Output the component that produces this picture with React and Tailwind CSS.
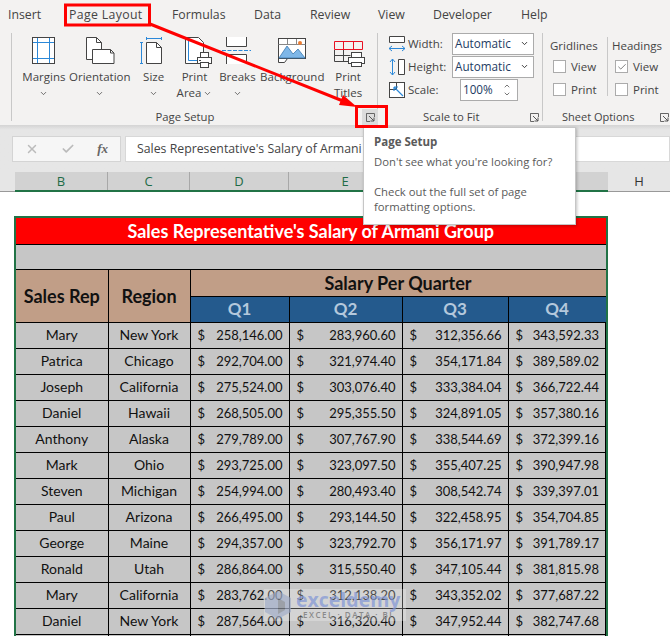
import { ChevronDown, ChevronUp, Check, X } from 'lucide-react'

const tabs = [
  ['Insert', 'w-[61px]'],
  ['Page Layout', 'w-[103px] tracking-[0.35px]'],
  ['Formulas', 'w-[82px]'],
  ['Data', 'w-[56px]'],
  ['Review', 'w-[68px]'],
  ['View', 'w-[55px]'],
  ['Developer', 'w-[88px]'],
  ['Help', 'w-[40px]'],
]

const rows = [
  ['Mary', 'New York', '258,146.00', '283,960.60', '312,356.66', '343,592.33'],
  ['Patrica', 'Chicago', '292,704.00', '321,974.40', '354,171.84', '389,589.02'],
  ['Joseph', 'California', '275,524.00', '303,076.40', '333,384.04', '366,722.44'],
  ['Daniel', 'Hawaii', '268,505.00', '295,355.50', '324,891.05', '357,380.16'],
  ['Anthony', 'Alaska', '279,789.00', '307,767.90', '338,544.69', '372,399.16'],
  ['Mark', 'Ohio', '293,725.00', '323,097.50', '355,407.25', '390,947.98'],
  ['Steven', 'Michigan', '254,994.00', '280,493.40', '308,542.74', '339,397.01'],
  ['Paul', 'Arizona', '266,495.00', '293,144.50', '322,458.95', '354,704.85'],
  ['George', 'Maine', '294,357.00', '323,792.70', '356,171.97', '391,789.17'],
  ['Ronald', 'Utah', '286,864.00', '315,550.40', '347,105.44', '381,815.98'],
  ['Mary', 'California', '283,762.00', '312,138.20', '343,352.02', '377,687.22'],
  ['Daniel', 'New York', '287,564.00', '316,320.40', '347,952.44', '382,747.68'],
  ['', '', '', '', '', ''],
]

const dark = '#444'
const blue = '#2b88d8'

function MarginsIcon() {
  return (
    <svg width="32" height="32" viewBox="0 0 32 32" fill="none">
      <rect x="4.500" y="0.500" width="22" height="26" fill="#fff" stroke={dark} />
      <path d="M9.500 1v25M21.500 1v25M5 5.500h21M5 21.500h21" stroke={blue} />
    </svg>
  )
}

function OrientationIcon() {
  return (
    <svg width="36" height="32" viewBox="0 0 36 32" fill="none">
      <path d="M4.500 0.500h10l5 5v17h-15z" fill="#fff" stroke={dark} />
      <path d="M14.500 0.500v5h5" stroke={dark} />
      <path d="M10.500 12.500h18l3.500 3.500v10.500h-21.500z" fill="#fff" stroke={dark} />
      <path d="M28.500 12.500v3.500h3.500" stroke={dark} />
    </svg>
  )
}

function SizeIcon() {
  return (
    <svg width="28" height="32" viewBox="0 0 28 32" fill="none">
      <path d="M6 1.500h16M6.500 0v3M21.500 0v3" stroke={blue} />
      <path d="M0 5.500h3M0 26.500h3M1.500 5v22" stroke={blue} />
      <path d="M6.500 5.500h10l5 5v16h-15z" fill="#fff" stroke={dark} />
      <path d="M16.500 5.500v5h5" stroke={dark} />
    </svg>
  )
}

function PrintAreaIcon() {
  return (
    <svg width="36" height="32" viewBox="0 0 36 32" fill="none">
      <path d="M8.500 0.500h13l5 5v21h-18z" fill="#fff" stroke={dark} />
      <path d="M11.500 3.500v20h12" stroke={blue} />
      <rect x="23.500" y="15.500" width="8" height="5" fill="#fff" stroke={dark} />
      <rect x="20.500" y="20.500" width="14" height="6" fill="#fff" stroke={dark} />
      <rect x="23.500" y="25.500" width="8" height="5" fill="#fff" stroke={dark} />
      <path d="M22 23.500h2" stroke={dark} />
    </svg>
  )
}

function BreaksIcon() {
  return (
    <svg width="32" height="32" viewBox="0 0 32 32" fill="none">
      <path d="M5.500 0v9.500h20V0" fill="#fff" stroke={dark} />
      <path d="M1 13.500h29" stroke={blue} strokeDasharray="4 1.500" />
      <path d="M5.500 27v-9.500h20V27" fill="#fff" stroke={dark} />
    </svg>
  )
}

function BackgroundIcon() {
  return (
    <svg width="30" height="32" viewBox="0 0 30 32" fill="none">
      <path d="M1.500 21.500v4h6l3-4" fill="#fff" stroke={dark} />
      <rect x="1.500" y="1.500" width="27" height="20" fill="#fff" stroke={dark} />
      <path d="M1.500 7.500h27M10.500 2v6M19.500 2v6" stroke="#888" />
      <path d="M2 21l8-12 6 8 5-5 7 9z" fill="#7eb7e8" stroke="#3b79b0" strokeWidth="0.800" />
      <circle cx="23" cy="6" r="2" fill="#ed7d31" />
    </svg>
  )
}

function PrintTitlesIcon() {
  return (
    <svg width="36" height="32" viewBox="0 0 36 32" fill="none">
      <path d="M4.500 4.500h28v8h-28zM13.500 4.500v8M23.500 4.500v8" stroke="#e81123" />
      <path d="M4.500 13v11.500h16M13.500 13v11M4.500 18.500h16" stroke={dark} />
      <rect x="21.500" y="15.500" width="10" height="5" fill="#fff" stroke={dark} />
      <rect x="18.500" y="20.500" width="16" height="6" fill="#fff" stroke={dark} />
      <rect x="21.500" y="25.500" width="10" height="4" fill="#fff" stroke={dark} />
    </svg>
  )
}

function WidthIcon() {
  return (
    <svg width="18" height="18" viewBox="0 0 18 18" fill="none">
      <path d="M1.500 1.500h15v6h-15z" fill="#fff" stroke={dark} />
      <path d="M1 13.500h16M1 13.500l3-2.500M1 13.500l3 2.500M17 13.500l-3-2.500M17 13.500l-3 2.500" stroke={blue} />
    </svg>
  )
}

function HeightIcon() {
  return (
    <svg width="18" height="18" viewBox="0 0 18 18" fill="none">
      <path d="M10.500 1.500h6v15h-6z" fill="#fff" stroke={dark} />
      <path d="M4.500 1v16M4.500 1L2 4M4.500 1L7 4M4.500 17L2 14M4.500 17L7 14" stroke={blue} />
    </svg>
  )
}

function ScaleIcon() {
  return (
    <svg width="18" height="18" viewBox="0 0 18 18" fill="none">
      <rect x="1.500" y="1.500" width="15" height="15" fill="#fff" stroke={dark} />
      <path d="M1.500 8.500h7v-7" stroke={dark} />
      <path d="M6 6l9 9M6 6h4M6 6v4" stroke={blue} strokeWidth="1.200" />
    </svg>
  )
}

function Launcher() {
  return (
    <svg width="9" height="9" viewBox="0 0 9 9" fill="none">
      <path d="M0.500 4V0.500h8V4M0.500 0.500v8H4" stroke="#666" />
      <path d="M3 3l5 5M8 4.500V8H4.500" stroke="#555" />
    </svg>
  )
}

function RibbonButton({ icon, first, second, w, noChevron }) {
  return (
    <div className={`flex flex-col items-center whitespace-nowrap ${w}`}>
      <div className="h-[32px] flex items-start justify-center">{icon}</div>
      <span className="h-4 leading-4">{first}</span>
      {!noChevron && (
        <span className="h-4 leading-4 flex items-center gap-[2px]">
          {second}
          {second !== 'Titles' && <ChevronDown size={9} strokeWidth={2} className="mt-px" />}
        </span>
      )}
    </div>
  )
}

function Box({ checked, label }) {
  return (
    <div className="flex items-center gap-[5px] h-[23px] pl-[3px]">
      <span className="w-[13px] h-[13px] bg-white border border-[#ababab] flex items-center justify-center">
        {checked && <Check size={10} strokeWidth={1.500} color="#333" />}
      </span>
      <span>{label}</span>
    </div>
  )
}

function Money({ value }) {
  return (
    <td className="border border-black p-0 pt-[2px]">
      <div className="flex justify-between pl-[7px] pr-[6px]">
        <span>{value && '$'}</span>
        <span>{value}</span>
      </div>
    </td>
  )
}

export default function App() {
  return (
    <div className="relative w-[670px] h-[636px] overflow-hidden bg-white font-['Open_Sans',sans-serif] text-[11.5px] text-[#444]">
      {/* Tabs */}
      <div className="h-[28px] bg-[#f3f2f1] flex items-center pl-[8px] pt-[2px] text-[12.3px]">
        {tabs.map(([t, w]) => (
          <span key={t} className={`shrink-0 whitespace-nowrap ${w}`}>
            {t}
          </span>
        ))}
      </div>

      {/* Ribbon */}
      <div className="h-[97px] bg-[#f3f2f1] flex text-[#444]">
        <div className="w-[366px] h-[88px] ml-[11px] mt-[5px] border-l border-[#c8c8c8] flex flex-col">
          <div className="flex pl-[4px] pt-[4px] h-[76px] shrink-0">
            <RibbonButton icon={<MarginsIcon />} first="Margins" second="" w="w-[56px]" />
            <RibbonButton icon={<OrientationIcon />} first="Orientation" second="" w="w-[56px]" />
            <RibbonButton icon={<SizeIcon />} first="Size" second="" w="w-[52px]" />
            <RibbonButton icon={<PrintAreaIcon />} first="Print" second="Area" w="w-[30px]" />
            <RibbonButton icon={<BreaksIcon />} first="Breaks" second="" w="w-[56px]" />
            <RibbonButton icon={<BackgroundIcon />} first="Background" noChevron w="w-[54px]" />
            <RibbonButton icon={<PrintTitlesIcon />} first="Print" second="Titles" w="w-[58px]" />
          </div>
          <div className="h-[16px] shrink-0 flex items-center justify-center pr-[19px] text-[11.3px]">
            <span>Page Setup</span>
          </div>
        </div>

        <div className="w-[165px] h-[88px] mt-[5px] border-l border-[#c8c8c8] flex flex-col">
          <div className="h-[76px] shrink-0 pl-[10px] -mt-px pb-px">
            {[
              ['Width:', <WidthIcon key="w" />, true],
              ['Height:', <HeightIcon key="h" />, true],
              ['Scale:', <ScaleIcon key="s" />, false],
            ].map(([label, icon, isSelect]) => (
              <div key={label} className="flex items-center h-[23px]">
                {icon}
                <span className="w-[44px] ml-[2px]">{label}</span>
                {isSelect ? (
                  <div className="w-[82px] h-[22px] bg-white border border-[#ababab] flex items-center justify-between pl-[2px] pr-1 text-[#1d3c63] text-[11.7px]">
                    Automatic
                    <ChevronDown size={9} strokeWidth={2.500} color="#333" />
                  </div>
                ) : (
                  <div className="ml-[8px] w-[58px] h-[22px] bg-white border border-[#ababab] flex items-center justify-between pl-[2px] pr-[6px] text-[#1d3c63] text-[11.7px]">
                    100%
                    <span className="flex flex-col text-[#333]">
                      <ChevronUp size={8} strokeWidth={2} />
                      <ChevronDown size={8} strokeWidth={2} />
                    </span>
                  </div>
                )}
              </div>
            ))}
          </div>
          <div className="h-[16px] shrink-0 flex items-center justify-between text-[11.3px] pl-[45px] pr-[3px] mt-px">
            <span>Scale to Fit</span>
            <Launcher />
          </div>
        </div>

        <div className="flex-1 h-[88px] mt-[5px] border-l border-[#c8c8c8] flex flex-col">
          <div className="h-[76px] shrink-0 flex pl-[7px] pt-[4px]">
            <div className="w-[57px]">
              <div className="h-[18px] leading-[18px]">Gridlines</div>
              <Box label="View" />
              <Box label="Print" />
            </div>
            <div className="border-l border-[#c8c8c8] pl-[4px] h-[59px]">
              <div className="h-[18px] leading-[18px]">Headings</div>
              <Box checked label="View" />
              <Box label="Print" />
            </div>
          </div>
          <div className="h-[16px] shrink-0 flex items-center justify-between text-[11px] pl-[19px] pr-[1px]">
            <span>Sheet Options</span>
            <Launcher />
          </div>
        </div>
      </div>

      {/* Formula bar */}
      <div className="h-[47px] bg-gradient-to-b from-[#d4d4d4] to-[#e6e6e6] to-[10%] flex items-center gap-1 pl-[12px] pt-[1px]">
        <div className="w-[109px] h-[26px] bg-[#f6f6f6] border border-[#d4d4d4] flex items-center justify-between px-[12px] text-[#bbb]">
          <X size={14} strokeWidth={2.500} />
          <Check size={14} strokeWidth={3} />
          <span className="font-['Liberation_Serif',serif] italic font-bold text-[13px] text-[#666]">fx</span>
        </div>
        <div className="flex-1 h-[26px] bg-white border border-[#d8d8d8] flex items-center pl-[11px] text-[12.3px]">
          Sales Representative's Salary of Armani Group
        </div>
      </div>

      {/* Column headers */}
      <div className="h-[20px] flex bg-[#e6e6e6] text-[#1f6b47] text-[13px] leading-[18px] text-center">
        <div className="w-[15px] border-b border-[#999]" />
        <div className="flex w-[593px] bg-[#d2d2d2] border-b-2 border-[#217346]">
          <div className="w-[93px] border-r border-[#a8a8a8]">B</div>
          <div className="w-[82px] border-r border-[#a8a8a8]">C</div>
          <div className="w-[99px] border-r border-[#a8a8a8]">D</div>
          <div className="w-[113px] border-r border-[#a8a8a8]">E</div>
          <div className="w-[106px] border-r border-[#a8a8a8]">F</div>
          <div className="flex-1">G</div>
        </div>
        <div className="flex-1 text-[#333] border-b border-[#999]">H</div>
      </div>

      {/* Sheet */}
      <div className="pl-[14px] pt-[24px]">
        <div className="w-[594px] border-2 border-[#217346] bg-[#c6c6c6] font-['Lato',sans-serif] text-[13px] text-[#111]">
          <table className="w-full table-fixed border-collapse">
            <colgroup>
              <col className="w-[92px]" />
              <col className="w-[82px]" />
              <col className="w-[99px]" />
              <col className="w-[113px]" />
              <col className="w-[106px]" />
              <col />
            </colgroup>
            <tbody>
              <tr className="h-[26px]">
                <td colSpan={6} className="p-0 bg-[#ff0000] text-white font-bold text-[18px] leading-[22px] text-center border-b border-black">
                  Sales Representative's Salary of Armani Group
                </td>
              </tr>
              <tr className="h-[25px]">
                <td colSpan={6} className="p-0" />
              </tr>
              <tr className="h-[27px] bg-[#c19e87] font-bold text-[18px] leading-[22px] text-center">
                <td rowSpan={2} className="p-0 border border-black border-l-0">Sales Rep</td>
                <td rowSpan={2} className="p-0 border border-black">Region</td>
                <td colSpan={4} className="p-0 border border-black border-r-0">Salary Per Quarter</td>
              </tr>
              <tr className="h-[26px] bg-[#245a8d] text-[#b4c8dc] font-bold text-[17px] leading-[22px] text-center">
                <td className="p-0 border border-black">Q1</td>
                <td className="p-0 border border-black">Q2</td>
                <td className="p-0 border border-black">Q3</td>
                <td className="p-0 border border-black border-r-0">Q4</td>
              </tr>
              {rows.map((r, i) => (
                <tr key={i} className="h-[26px]">
                  <td className="p-0 border border-black border-l-0 text-center text-[14px] leading-[20px]">{r[0]}</td>
                  <td className="p-0 border border-black text-center text-[14px] leading-[20px]">{r[1]}</td>
                  {r.slice(2).map((v, j) => (
                    <Money key={j} value={v} />
                  ))}
                </tr>
              ))}
            </tbody>
          </table>
        </div>
      </div>

      {/* Watermark */}
      <div className="absolute left-[264px] top-[589px] w-[142px] h-[32px] bg-white/25 flex items-center">
        <svg width="28" height="30" viewBox="0 0 28 30" className="shrink-0 opacity-60">
          <path d="M14 1l13 7v14l-13 7-13-7V8z" fill="#9aa8c8" />
          <path d="M14 8l7 4v8l-7 4z" fill="#777f8c" />
        </svg>
        <div className="flex flex-col items-center -mt-[3px] ml-[4px]">
          <span className="font-bold text-[19.5px] leading-[21px] text-[#7f95d6]/70">exceldemy</span>
          <span className="text-[8px] leading-[9px] tracking-[1.500px] text-[#8a8a8a] font-semibold">EXCEL · DATA · BI</span>
        </div>
      </div>

      {/* Launcher highlight */}
      <div className="absolute left-[362px] top-[109px] w-[16px] h-[16px] bg-[#dcdcdc] flex items-center justify-center">
        <Launcher />
      </div>

      {/* Tooltip */}
      <div className="absolute left-[363px] top-[127px] w-[213px] h-[98px] bg-white border border-[#c6c6c6] shadow-[1px_1px_3px_rgba(0,0,0,0.25)] px-[10px] pt-[3px] text-[11.3px] leading-[15px] text-[#5a5a5a] whitespace-nowrap">
        <div className="font-bold h-[21px] leading-[21px] text-[11.5px]">Page Setup</div>
        <div className="mt-[2px]">Don't see what you're looking for?</div>
        <div className="mt-[15px]">Check out the full set of page</div>
        <div>formatting options.</div>
      </div>

      {/* Callout drawing */}
      <svg className="absolute left-0 top-0 pointer-events-none" width="670" height="636" fill="none">
        <rect x="65.500" y="5" width="84" height="20" stroke="#f00" strokeWidth="3" />
        <rect x="356.500" y="106.500" width="30" height="20" stroke="#f00" strokeWidth="3" />
        <path d="M150 24L343 101" stroke="#f00" strokeWidth="3" />
        <path d="M357 107L339 105L343 95z" fill="#f00" />
      </svg>
    </div>
  )
}
